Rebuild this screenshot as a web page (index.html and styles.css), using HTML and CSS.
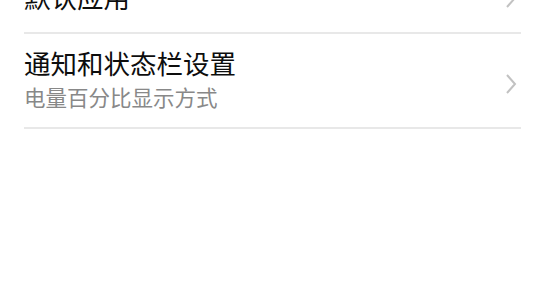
FILE: index.html
```html
<!DOCTYPE html>
<html lang="zh-CN">
<head>
  <meta charset="UTF-8" />
  <meta name="viewport" content="width=device-width, initial-scale=1.0"/>
  <title>设置</title>
  <link rel="stylesheet" href="styles.css">
</head>
<body>
  <div class="settings-list">
    <div class="setting-item single">
      <div class="item-text">
        <div class="item-title">默认应用</div>
      </div>
      <svg class="chevron" width="12" height="20" viewBox="0 0 12 20">
        <polyline points="2,1 10,10 2,19" />
      </svg>
    </div>
    <div class="setting-item">
      <div class="item-text">
        <div class="item-title">通知和状态栏设置</div>
        <div class="item-sub">电量百分比显示方式</div>
      </div>
      <svg class="chevron" width="12" height="20" viewBox="0 0 12 20">
        <polyline points="2,1 10,10 2,19" />
      </svg>
    </div>
  </div>
</body>
</html>
```

FILE: styles.css
```css
:root {
  --text: #0d0d0d;
  --sub: #888888;
  --divider: #e8e8e8;
  --chevron: #c2c2c2;
  --font: 'Noto Sans CJK SC', 'Noto Sans', sans-serif;
}

body {
  margin: 0;
  background: #ffffff;
  font-family: var(--font);
  overflow: hidden;
}

.settings-list {
  margin: -38px 24px 0 24px;
}

.setting-item {
  display: flex;
  align-items: center;
  justify-content: space-between;
  border-bottom: 2px solid var(--divider);
  padding: 13px 4px 15px 0;
}

.setting-item.single {
  height: 70px;
  padding-top: 0;
  padding-bottom: 0;
}

.item-title {
  font-size: 26.5px;
  line-height: 32px;
  color: var(--text);
}

.item-sub {
  font-size: 21.5px;
  line-height: 30px;
  color: var(--sub);
  margin-top: 3px;
}

.chevron {
  flex-shrink: 0;
  margin-top: 8px;
}

.single .chevron {
  margin-top: 2px;
}

.chevron polyline {
  fill: none;
  stroke: var(--chevron);
  stroke-width: 2;
}
```
